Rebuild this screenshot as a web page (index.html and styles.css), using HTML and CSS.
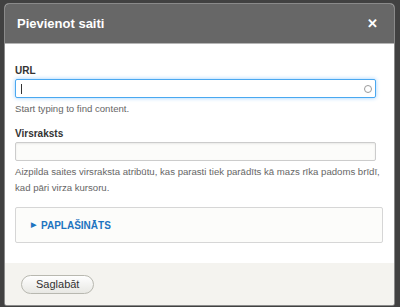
FILE: index.html
```html
<!DOCTYPE html>
<html>
  <head>
    <meta charset="UTF-8" />
    <title>Pievienot saiti</title>
    <link rel="stylesheet" href="styles.css">
  </head>
  <body>
    <div class="dialogs">
      <div class="dialogo">
        <div class="cabecera">
          <span class="titulo">Pievienot saiti</span>
          <span class="cerrar">&#10005;</span>
        </div>
        <div class="cuerpo">
          <div class="campo">
            <label class="etiqueta">URL</label>
            <div class="entrada foco">
              <span class="cursor"></span>
              <span class="anillo"></span>
            </div>
            <p class="ayuda">Start typing to find content.</p>
          </div>
          <div class="campo">
            <label class="etiqueta">Virsraksts</label>
            <div class="entrada"></div>
            <p class="ayuda">Aizpilda saites virsraksta atribūtu, kas parasti tiek parādīts kā mazs rīka padoms brīdī, kad pāri virza kursoru.</p>
          </div>
          <div class="detalles">
            <span class="flecha">&#9654;</span>
            <span class="resumen">Paplašināts</span>
          </div>
        </div>
        <div class="pie">
          <button class="boton">Saglabāt</button>
        </div>
      </div>
    </div>
    <p class="fondo">mes celšanas likums, ar ko pārņem ES Trauksmes cēlēju direktīvu.</p>
  </body>
</html>
```

FILE: styles.css
```css
body {
  margin: 0;
  padding: 0;
  background-color: #414141;
  font-family: "Liberation Sans", Arial, sans-serif;
  overflow: hidden;
  height: 307px;
}

.dialogs {
  padding: 4px 6px 0 5px;
}

.dialogo {
  background-color: #fff;
  border-radius: 4px 4px 2px 2px;
  overflow: hidden;
  box-shadow: 0 0 0 1px #8a8a8a;
}

.cabecera {
  height: 40px;
  box-sizing: border-box;
  background-color: #676767;
  border-bottom: 1px solid #b5b5b5;
  display: flex;
  align-items: center;
  justify-content: space-between;
  padding: 0 16px 0 12px;
  color: #fff;
}

.titulo {
  font-size: 13px;
  font-weight: bold;
}

.cerrar {
  font-size: 13px;
  font-weight: bold;
}

.cuerpo {
  padding: 21px 11px 20px 10px;
}

.campo {
  margin-bottom: 11px;
}

.etiqueta {
  display: block;
  font-size: 10px;
  line-height: 12px;
  font-weight: bold;
  color: #333;
  margin-bottom: 2px;
}

.entrada {
  height: 17px;
  width: 351px;
  border: 1px solid #ccc;
  border-radius: 2px;
  background-color: #fcfcfa;
  box-shadow: inset 0 1px 2px rgba(0, 0, 0, 0.08);
  display: flex;
  align-items: center;
  justify-content: space-between;
  padding: 0 3px 0 5px;
}

.foco {
  background-color: #fff;
  border-color: #4aa8f0;
  box-shadow: 0 0 4px #9cd0ff;
}

.cursor {
  width: 1px;
  height: 10px;
  background-color: #333;
}

.anillo {
  width: 6px;
  height: 6px;
  border: 1px solid #9a9a9a;
  border-radius: 50%;
}

.ayuda {
  font-size: 9.6px;
  color: #666;
  line-height: 16px;
  margin: 3px 0 0 0;
}

.detalles {
  margin-top: 8px;
  height: 34px;
  border: 1px solid #d6d6d6;
  border-radius: 2px;
  background-color: #fcfcfa;
  display: flex;
  align-items: center;
  padding-left: 15px;
  color: #1d74c0;
  font-weight: bold;
  font-size: 10px;
}

.flecha {
  font-size: 7px;
  margin-right: 5px;
}

.resumen {
  text-transform: uppercase;
}

.pie {
  height: 42px;
  background-color: #f4f3ef;
  display: flex;
  align-items: center;
  padding-left: 16px;
}

.boton {
  font-family: "Liberation Sans", Arial, sans-serif;
  font-size: 11px;
  color: #333;
  height: 19px;
  padding: 0 14px;
  border: 1px solid #b8b8b0;
  border-radius: 12px;
  background: linear-gradient(#fefefe, #e8e8e4);
}

.fondo {
  margin: 0;
  padding: 2px 0 0 20px;
  font-size: 11px;
  line-height: 9px;
  color: #241b2e;
  text-decoration: underline;
}
```
